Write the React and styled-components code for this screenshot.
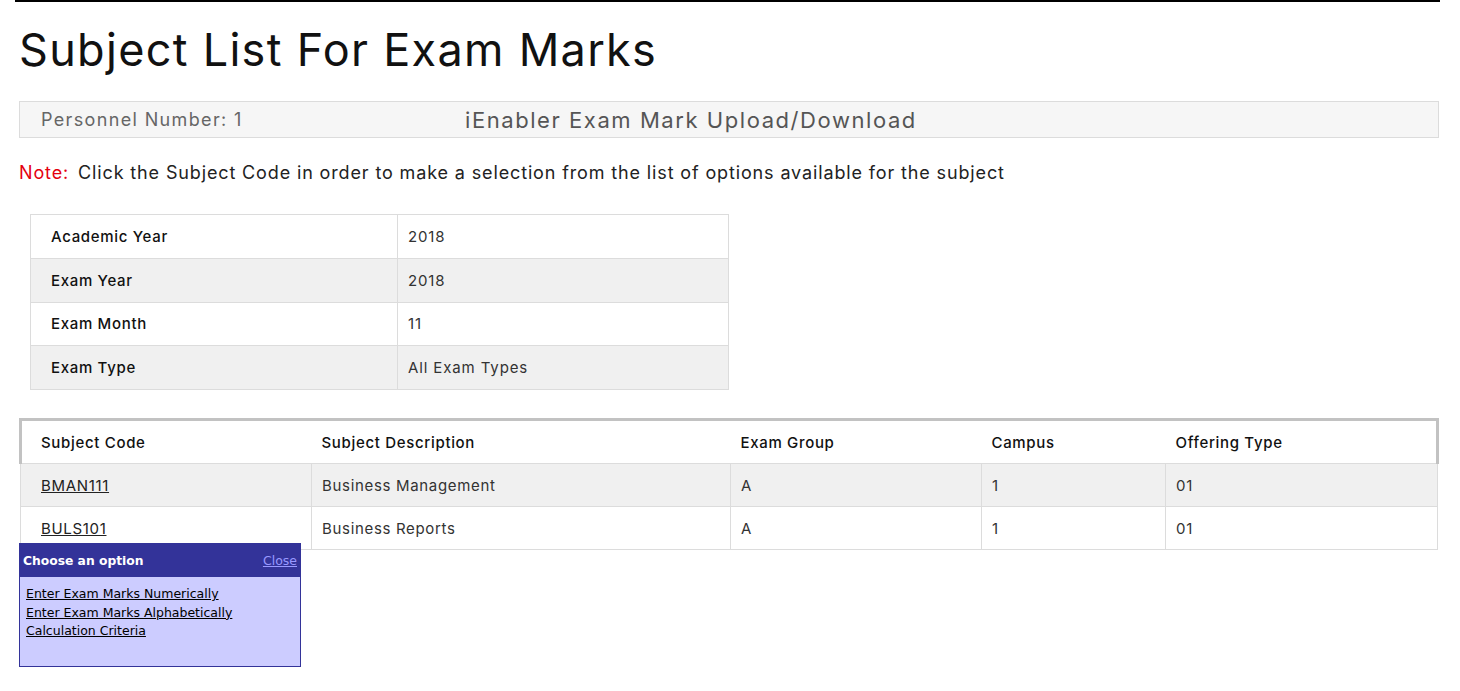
import styled, { createGlobalStyle } from "styled-components";

const GlobalStyle = createGlobalStyle`
  body {
    margin: 0;
    background: #fff;
    font-family: Inter, "Open Sans", sans-serif;
    color: #222;
  }
`

const Page = styled.div`
    position: relative;
    box-sizing: border-box;
    min-height: 691px;
    padding: 0 21px 40px 19px;
    letter-spacing: 0.055em;
`

const TopRule = styled.div`
    height: 2px;
    margin-left: -4px;
    margin-right: -1px;
    background: #000;
`

const Title = styled.h1`
    margin: 21px 0 0;
    font-size: 45px;
    font-weight: 400;
    line-height: 54px;
    color: #111;
    letter-spacing: 1.3px;
`

const InfoBar = styled.div`
    margin-top: 24px;
    height: 35px;
    display: grid;
    grid-template-columns: 424px 1fr;
    align-items: center;
    background: #f6f6f6;
    border: 1px solid #dcdcdc;
`

const PersonnelText = styled.span`
    padding-left: 21px;
    font-size: 18px;
    color: #666;
    letter-spacing: 0.075em;
`

const BarTitle = styled.span`
    padding-left: 21px;
    font-size: 22px;
    color: #555;
    letter-spacing: 0.071em;
`

const Note = styled.p`
    margin: 24px 0 0;
    font-size: 18px;
    color: #222;
    letter-spacing: 0.048em;
`

const NoteLabel = styled.span`
    color: #e4000f;
    margin-right: 9px;
`

const InfoTable = styled.table`
    margin: 31px 0 0 11px;
    width: 699px;
    border-collapse: collapse;
    font-size: 15px;
`

const InfoRow = styled.tr`
    height: 43.75px;
    background: ${(p) => (p.$shade ? "#f0f0f0" : "#fff")};
`

const InfoLabel = styled.td`
    width: 326px;
    padding: 0 20px;
    border: 1px solid #dcdcdc;
    font-weight: 500;
    color: #111;
    letter-spacing: 0.045em;
`

const InfoValue = styled.td`
    padding: 0 10px;
    border: 1px solid #dcdcdc;
    color: #333;
`

const SubjectTable = styled.table`
    margin-top: 28px;
    width: 100%;
    border-collapse: collapse;
    font-size: 15px;
    letter-spacing: 0.045em;
`

const HeadRow = styled.tr`
    height: 44px;
    background: #fff;
`

const HeadCell = styled.th`
    text-align: left;
    font-weight: 500;
    color: #111;
    padding: 0 10px;
    border-top: 3px solid #c2c2c2;
    border-bottom: 1px solid #dcdcdc;

    &:first-child {
        border-left: 3px solid #c2c2c2;
        padding-left: 19px;
    }

    &:last-child {
        border-right: 3px solid #c2c2c2;
    }
`

const BodyRow = styled.tr`
    height: 43px;
    background: ${(p) => (p.$shade ? "#f0f0f0" : "#fff")};
`

const BodyCell = styled.td`
    padding: 0 10px;
    border: 1px solid #dcdcdc;
    color: #333;
    width: ${(p) => p.$w || "auto"};

    &:first-child {
        padding-left: 20px;
    }
`

const CodeLink = styled.a`
    color: #222;
    text-decoration: underline;
    cursor: pointer;
`

const Popup = styled.div`
    position: absolute;
    top: 543px;
    left: 19px;
    width: 280px;
    height: 122px;
    background: #ccccff;
    border: 1px solid #333399;
    font-family: "DejaVu Sans", Verdana, sans-serif;
    letter-spacing: 0;
`

const PopupHead = styled.div`
    height: 33px;
    display: flex;
    align-items: center;
    justify-content: space-between;
    padding: 0 3px;
    background: #333399;
    color: #fff;
    font-size: 12.3px;
    font-weight: 700;
`

const CloseLink = styled.a`
    font-size: 12.5px;
    font-weight: 400;
    color: #9999ff;
    text-decoration: underline;
    cursor: pointer;
`

const PopupBody = styled.div`
    padding: 8px 6px;
    display: flex;
    flex-direction: column;
`

const OptionLink = styled.a`
    font-size: 12.5px;
    line-height: 18.5px;
    color: #000;
    text-decoration: underline;
    cursor: pointer;
`

const info = [
  ["Academic Year", "2018"],
  ["Exam Year", "2018"],
  ["Exam Month", "11"],
  ["Exam Type", "All Exam Types"],
];

const subjects = [
  {code: "BMAN111", desc: "Business Management", group: "A", campus: "1", type: "01"},
  {code: "BULS101", desc: "Business Reports", group: "A", campus: "1", type: "01"},
];

const options = [
  "Enter Exam Marks Numerically",
  "Enter Exam Marks Alphabetically",
  "Calculation Criteria",
];

export default function App() {
  return (
      <Page>
        <GlobalStyle />
        <TopRule />
        <Title>Subject List For Exam Marks</Title>

        <InfoBar>
          <PersonnelText>Personnel Number: 1</PersonnelText>
          <BarTitle>iEnabler Exam Mark Upload/Download</BarTitle>
        </InfoBar>

        <Note>
          <NoteLabel>Note:</NoteLabel>
          Click the Subject Code in order to make a selection from the list of options available for the subject
        </Note>

        <InfoTable>
          <tbody>
          {info.map(([label, value], i) => (
              <InfoRow key={label} $shade={i % 2 === 1}>
                <InfoLabel>{label}</InfoLabel>
                <InfoValue>{value}</InfoValue>
              </InfoRow>
          ))}
          </tbody>
        </InfoTable>

        <SubjectTable>
          <thead>
          <HeadRow>
            <HeadCell>Subject Code</HeadCell>
            <HeadCell>Subject Description</HeadCell>
            <HeadCell>Exam Group</HeadCell>
            <HeadCell>Campus</HeadCell>
            <HeadCell>Offering Type</HeadCell>
          </HeadRow>
          </thead>
          <tbody>
          {subjects.map((s, i) => (
              <BodyRow key={s.code} $shade={i % 2 === 0}>
                <BodyCell $w="260px"><CodeLink>{s.code}</CodeLink></BodyCell>
                <BodyCell $w="398px">{s.desc}</BodyCell>
                <BodyCell $w="230px">{s.group}</BodyCell>
                <BodyCell $w="163px">{s.campus}</BodyCell>
                <BodyCell>{s.type}</BodyCell>
              </BodyRow>
          ))}
          </tbody>
        </SubjectTable>

        <Popup>
          <PopupHead>
            <span>Choose an option</span>
            <CloseLink>Close</CloseLink>
          </PopupHead>
          <PopupBody>
            {options.map((o) => (
                <OptionLink key={o}>{o}</OptionLink>
            ))}
          </PopupBody>
        </Popup>
      </Page>
  );
}
